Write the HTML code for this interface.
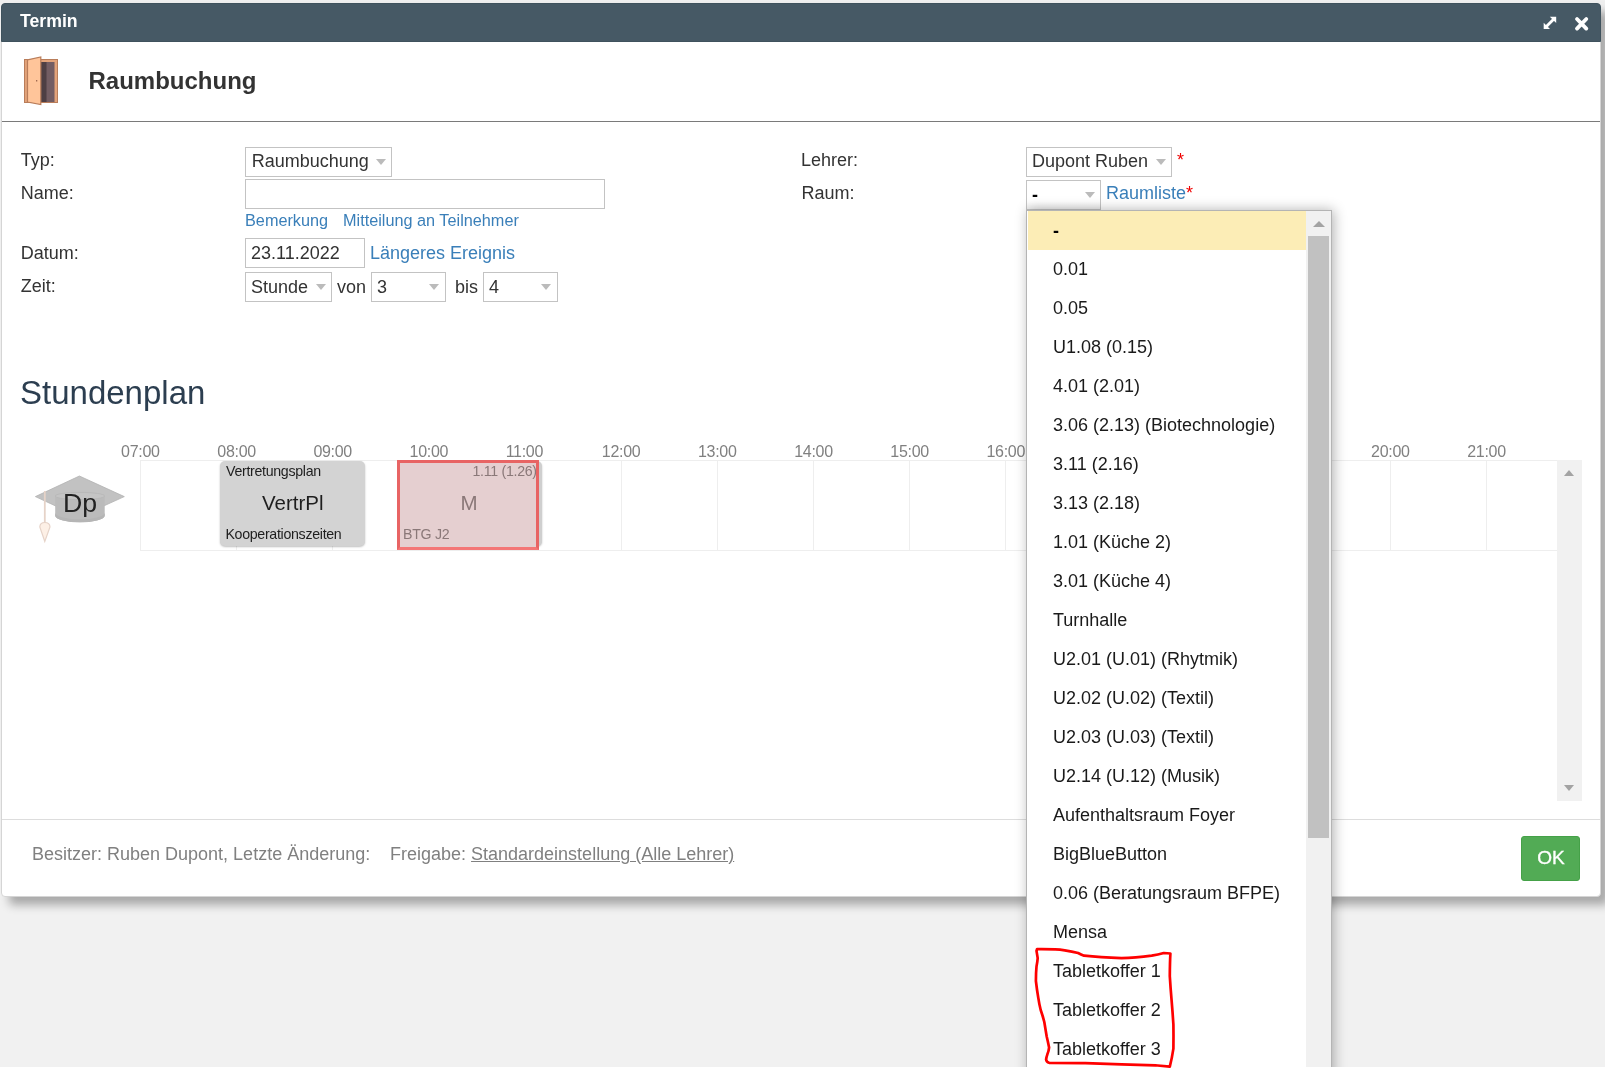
<!DOCTYPE html>
<html><head><meta charset="utf-8">
<style>
html,body{margin:0;padding:0;}
body{width:1605px;height:1069px;position:relative;overflow:hidden;background:#f1f1f1;font-family:"Liberation Sans",sans-serif;color:#333;}
.a{position:absolute;}
.t{position:absolute;white-space:nowrap;line-height:1;}
#root{position:absolute;left:0;top:0;width:1605px;height:1069px;will-change:transform;}
#dlg{position:absolute;left:1px;top:3px;width:1600px;height:894px;background:#fff;border-radius:4px;box-shadow:8px 8px 10px rgba(0,0,0,.3);border:1px solid #d5d5d5;box-sizing:border-box;}
#hdr{position:absolute;left:1px;top:3px;width:1600px;height:38.5px;background:#465965;border:1px solid #3f525d;box-sizing:border-box;border-radius:4px 4px 0 0;}
.sel{position:absolute;box-sizing:border-box;border:1px solid #c3c3c3;background:#fff;}
.inp{position:absolute;box-sizing:border-box;border:1px solid #c3c3c3;background:#fff;}
.arr{position:absolute;width:0;height:0;border-left:5px solid transparent;border-right:5px solid transparent;border-top:6px solid #bbb;}
.lnk{color:#3a7fb9;}
.hl{position:absolute;top:460px;height:90px;width:1px;background:#eee;}
.tm{position:absolute;top:443.5px;font-size:16px;letter-spacing:-0.3px;color:#808080;line-height:1;white-space:nowrap;}
.it{position:absolute;left:1053px;font-size:18px;color:#1a1a1a;line-height:1;white-space:nowrap;}
</style></head><body><div id="root">
<div class="a" style="left:0;top:0;width:1605px;height:3px;background:#efefef"></div>
<div id="dlg"></div>
<div id="hdr"></div>
<div class="t" style="left:20px;top:13.2px;font-size:17.7px;font-weight:bold;color:#fff">Termin</div>
<!-- expand icon -->
<svg class="a" style="left:0;top:0" width="1605" height="45">
<path d="M1545.6 27.2 L1554.4 18.4" stroke="#fff" stroke-width="2.8"/>
<path d="M1549.8 16.8 L1556.2 16.8 L1556.2 23.1 Z" fill="#fff"/>
<path d="M1543.7 22.8 L1543.7 29.1 L1550 29.1 Z" fill="#fff"/>
</svg>
<!-- close icon -->
<svg class="a" style="left:0;top:0" width="1605" height="45">
<path d="M1577 19 L1586.3 28.6 M1586.3 19 L1577 28.6" stroke="#fff" stroke-width="3.8" stroke-linecap="round"/>
</svg>

<!-- door icon -->
<svg class="a" style="left:23px;top:56px" width="38" height="50" viewBox="0 0 38 50">
<rect x="1.5" y="3.5" width="33" height="43" fill="#e3a37a" stroke="#b97d5a" stroke-width="1"/>
<rect x="17.5" y="6" width="14" height="40" fill="#735d63"/>
<rect x="17.5" y="6" width="6" height="40" fill="#4e3f44"/>
<path d="M4.5 3.8 L17.8 1 L17.8 48.5 L4.5 46 Z" fill="#ffc59a" stroke="#b97d5a" stroke-width="1.2"/>
<rect x="13" y="24" width="1.3" height="1.5" fill="#a06a50"/>
</svg>
<div class="t" style="left:88.5px;top:69px;font-size:24px;font-weight:bold;color:#333">Raumbuchung</div>
<div class="a" style="left:2px;top:121px;width:1598px;height:1px;background:#7a7a7a"></div>

<!-- form left -->
<div class="t" style="left:20.7px;top:151px;font-size:18px">Typ:</div>
<div class="t" style="left:20.7px;top:184px;font-size:18px">Name:</div>
<div class="t" style="left:20.7px;top:244px;font-size:18px">Datum:</div>
<div class="t" style="left:20.7px;top:276.5px;font-size:18px">Zeit:</div>

<div class="sel" style="left:245px;top:147px;width:147px;height:30px"></div>
<div class="t" style="left:251.7px;top:152px;font-size:18px">Raumbuchung</div>
<div class="arr" style="left:376px;top:159px"></div>

<div class="inp" style="left:245px;top:179px;width:360px;height:30px"></div>
<div class="t lnk" style="left:245px;top:212px;font-size:16.25px">Bemerkung</div>
<div class="t lnk" style="left:343px;top:212px;font-size:16.25px">Mitteilung an Teilnehmer</div>

<div class="inp" style="left:245px;top:238px;width:120px;height:30px"></div>
<div class="t" style="left:251px;top:244px;font-size:18px">23.11.2022</div>
<div class="t lnk" style="left:370px;top:244px;font-size:18px">Längeres Ereignis</div>

<div class="sel" style="left:245px;top:272px;width:87px;height:30px"></div>
<div class="t" style="left:251px;top:278px;font-size:18px">Stunde</div>
<div class="arr" style="left:316px;top:284px"></div>
<div class="t" style="left:337px;top:278px;font-size:18px">von</div>
<div class="sel" style="left:371px;top:272px;width:75px;height:30px"></div>
<div class="t" style="left:377px;top:278px;font-size:18px">3</div>
<div class="arr" style="left:429px;top:284px"></div>
<div class="t" style="left:455px;top:278px;font-size:18px">bis</div>
<div class="sel" style="left:483px;top:272px;width:75px;height:30px"></div>
<div class="t" style="left:489px;top:278px;font-size:18px">4</div>
<div class="arr" style="left:541px;top:284px"></div>

<!-- form right -->
<div class="t" style="left:801px;top:151px;font-size:18px">Lehrer:</div>
<div class="t" style="left:801.5px;top:183.6px;font-size:18px">Raum:</div>
<div class="sel" style="left:1026px;top:147px;width:146px;height:30px"></div>
<div class="t" style="left:1032px;top:152px;font-size:18px">Dupont Ruben</div>
<div class="arr" style="left:1156px;top:159px"></div>
<div class="t" style="left:1177px;top:151px;font-size:18px;color:#e00">*</div>
<div class="sel" style="left:1026px;top:180px;width:75px;height:30px;background:linear-gradient(#fff 72%,#efefef)"></div>
<div class="t" style="left:1032px;top:186px;font-size:18px;color:#000;font-weight:bold">-</div>
<div class="arr" style="left:1085px;top:192px"></div>
<div class="t lnk" style="left:1106px;top:183.5px;font-size:18px">Raumliste<span style="color:#e00">*</span></div>

<!-- Stundenplan -->
<div class="t" style="left:20px;top:376px;font-size:33px;color:#2c3e50">Stundenplan</div>
<div class="a" style="left:140px;top:460px;width:1417px;height:1px;background:#eee"></div>
<div class="a" style="left:140px;top:550px;width:1417px;height:1px;background:#eee"></div>
<div class="hl" style="left:139.8px"></div>
<div class="tm" style="left:121.1px">07:00</div>
<div class="hl" style="left:236.0px"></div>
<div class="tm" style="left:217.3px">08:00</div>
<div class="hl" style="left:332.1px"></div>
<div class="tm" style="left:313.4px">09:00</div>
<div class="hl" style="left:428.3px"></div>
<div class="tm" style="left:409.6px">10:00</div>
<div class="hl" style="left:524.4px"></div>
<div class="tm" style="left:505.7px">11:00</div>
<div class="hl" style="left:620.5px"></div>
<div class="tm" style="left:601.8px">12:00</div>
<div class="hl" style="left:716.7px"></div>
<div class="tm" style="left:698.0px">13:00</div>
<div class="hl" style="left:812.9px"></div>
<div class="tm" style="left:794.2px">14:00</div>
<div class="hl" style="left:909.0px"></div>
<div class="tm" style="left:890.3px">15:00</div>
<div class="hl" style="left:1005.2px"></div>
<div class="tm" style="left:986.5px">16:00</div>
<div class="hl" style="left:1101.3px"></div>
<div class="tm" style="left:1082.6px">17:00</div>
<div class="hl" style="left:1197.5px"></div>
<div class="tm" style="left:1178.8px">18:00</div>
<div class="hl" style="left:1293.6px"></div>
<div class="tm" style="left:1274.9px">19:00</div>
<div class="hl" style="left:1389.8px"></div>
<div class="tm" style="left:1371.1px">20:00</div>
<div class="hl" style="left:1485.9px"></div>
<div class="tm" style="left:1467.2px">21:00</div>


<!-- timeline scroll -->
<div class="a" style="left:1557px;top:460px;width:25px;height:341px;background:#f1f1f1"></div>
<div class="a" style="left:1564px;top:470px;width:0;height:0;border-left:5.5px solid transparent;border-right:5.5px solid transparent;border-bottom:6px solid #a3a3a3"></div>
<div class="a" style="left:1564px;top:785px;width:0;height:0;border-left:5.5px solid transparent;border-right:5.5px solid transparent;border-top:6px solid #a3a3a3"></div>
<!-- cap icon -->
<svg class="a" style="left:30px;top:470px" width="100" height="75" viewBox="30 470 100 75">
<path d="M35.4 496.6 L79.4 476 L124.3 496.6 L79.4 517 Z" fill="#c2c2c2" stroke="#b2b2b2" stroke-width="0.8"/>
<path d="M55.2 496 L55.2 516 A24.8 6.8 0 0 0 104.7 516 L104.7 496 Z" fill="#bbbbbb"/>
<ellipse cx="79.95" cy="496" rx="24.75" ry="3.6" fill="#c4c4c4" stroke="#b6b6b6" stroke-width="0.8"/>
<path d="M55.2 513 A24.8 6.8 0 0 0 104.7 513 L104.7 516 A24.8 6.8 0 0 1 55.2 516 Z" fill="#b5b5b5"/>
<line x1="44.8" y1="491" x2="44.8" y2="524" stroke="#e6d3c8" stroke-width="1.8"/>
<path d="M44.8 541.5 L39.8 527 Q40 522.5 44.8 522.5 Q49.8 522.5 50 527 Z" fill="#fdf0e6" stroke="#e6d3c8" stroke-width="1.2"/>
</svg>
<div class="t" style="left:63px;top:489.5px;font-size:26.7px;color:#222">Dp</div>
<!-- VertrPl box -->
<div class="a" style="left:220px;top:461px;width:145px;height:85px;background:#d3d3d3;border-radius:5px;box-shadow:0 1px 2px rgba(0,0,0,.25)"></div>
<div class="t" style="left:226px;top:463.7px;font-size:14.2px;letter-spacing:-0.3px;color:#1e1e1e">Vertretungsplan</div>
<div class="t" style="left:262px;top:492.5px;font-size:20.5px;color:#1e1e1e">VertrPl</div>
<div class="t" style="left:225.4px;top:526.5px;font-size:14.2px;letter-spacing:-0.3px;color:#1e1e1e">Kooperationszeiten</div>
<!-- M box -->
<div class="a" style="left:400px;top:461px;width:142px;height:85px;background:#cfcfcf;border-radius:5px;box-shadow:0 1px 2px rgba(0,0,0,.25)"></div>
<div class="a" style="left:397px;top:460px;width:142px;height:90px;box-sizing:border-box;background:#e5cfd0;border:3px solid #e86464;border-bottom-color:#f47676"></div>
<div class="t" style="left:472.5px;top:464px;font-size:14.2px;letter-spacing:-0.3px;color:#8a7878">1.11 (1.26)</div>
<div class="t" style="left:460.5px;top:492.5px;font-size:20.5px;color:#8a7878">M</div>
<div class="t" style="left:403px;top:526.5px;font-size:14.2px;letter-spacing:-0.3px;color:#8a7878">BTG J2</div>

<!-- footer -->
<div class="a" style="left:2px;top:819px;width:1598px;height:1px;background:#ddd"></div>
<div class="t" style="left:32px;top:845px;font-size:18px;color:#808080">Besitzer: Ruben Dupont, Letzte Änderung:</div>
<div class="t" style="left:390px;top:845px;font-size:18px;color:#808080">Freigabe: <span style="text-decoration:underline">Standardeinstellung (Alle Lehrer)</span></div>
<div class="a" style="left:1521px;top:836px;width:59px;height:45px;box-sizing:border-box;background:#52ab55;border:1px solid #45a148;border-radius:3px"></div>
<div class="t" style="left:1537.3px;top:848px;font-size:19px;color:#fff;-webkit-text-stroke:0.35px #fff">OK</div>

<!-- dropdown -->
<div class="a" style="left:1026px;top:210px;width:306px;height:870px;box-sizing:border-box;background:#fff;border:1px solid #b4b4b4;box-shadow:1.5px 0 12px rgba(0,0,0,.3)"></div>
<div class="a" style="left:1028px;top:211px;width:278px;height:39px;background:#fcedb6"></div>
<div class="a" style="left:1306px;top:211px;width:25px;height:860px;background:#f1f1f1"></div>
<div class="a" style="left:1308px;top:236px;width:21px;height:602px;background:#c1c1c1"></div>
<div class="a" style="left:1313px;top:221px;width:0;height:0;border-left:6px solid transparent;border-right:6px solid transparent;border-bottom:6px solid #a3a3a3"></div>
<div class="it" style="top:221.5px;color:#000;font-weight:bold">-</div>
<div class="it" style="top:259.5px">0.01</div>
<div class="it" style="top:298.5px">0.05</div>
<div class="it" style="top:337.5px">U1.08 (0.15)</div>
<div class="it" style="top:376.5px">4.01 (2.01)</div>
<div class="it" style="top:415.5px">3.06 (2.13) (Biotechnologie)</div>
<div class="it" style="top:454.5px">3.11 (2.16)</div>
<div class="it" style="top:493.5px">3.13 (2.18)</div>
<div class="it" style="top:532.5px">1.01 (Küche 2)</div>
<div class="it" style="top:571.5px">3.01 (Küche 4)</div>
<div class="it" style="top:610.5px">Turnhalle</div>
<div class="it" style="top:649.5px">U2.01 (U.01) (Rhytmik)</div>
<div class="it" style="top:688.5px">U2.02 (U.02) (Textil)</div>
<div class="it" style="top:727.5px">U2.03 (U.03) (Textil)</div>
<div class="it" style="top:766.5px">U2.14 (U.12) (Musik)</div>
<div class="it" style="top:805.5px">Aufenthaltsraum Foyer</div>
<div class="it" style="top:844.5px">BigBlueButton</div>
<div class="it" style="top:883.5px">0.06 (Beratungsraum BFPE)</div>
<div class="it" style="top:922.5px">Mensa</div>
<div class="it" style="top:961.5px">Tabletkoffer 1</div>
<div class="it" style="top:1000.5px">Tabletkoffer 2</div>
<div class="it" style="top:1039.5px">Tabletkoffer 3</div>

<div class="a" style="left:0;top:1067px;width:1605px;height:2px;background:#fff"></div>
<svg class="a" style="left:0;top:0" width="1605" height="1069">
<path d="M1037.1 949 C1045 949.2 1055.2 949.4 1055.2 949.4 C1060 949.6 1064.8 950.3 1064.8 950.3 C1072 951.5 1078.1 953 1078.1 953 C1081 954.5 1084.1 955.7 1084.1 955.7 C1100 957.5 1121.5 958.1 1121.5 958.1 C1135 957.8 1151.7 955.7 1151.7 955.7 C1158 954.6 1163.8 953 1163.8 953 L1170.4 953.5 C1169.9 962 1169.8 976.2 1169.8 976.2 C1170.5 988 1171.6 1000.3 1171.6 1000.3 C1172.6 1012 1173.4 1024.5 1173.4 1024.5 C1173.6 1036 1173.4 1048.6 1173.4 1048.6 C1172 1058 1169.8 1066.7 1169.8 1066.7 C1163 1066 1157.7 1065.5 1157.7 1065.5 C1140 1064.8 1121.5 1064.3 1121.5 1064.3 C1100 1063.7 1085.3 1063.1 1085.3 1063.1 C1068 1062.9 1049.1 1062.8 1049.1 1062.8 C1046.5 1062 1046.1 1059.5 1046.1 1059.5 C1046.4 1057 1047.3 1054.6 1047.3 1054.6 C1048.8 1051 1049.1 1047.4 1049.1 1047.4 C1048 1042 1046.7 1036.5 1046.7 1036.5 C1045.5 1029 1044.3 1022 1044.3 1022 C1042.8 1016 1040.7 1010 1040.7 1010 C1039.2 1004 1038.3 997.9 1038.3 997.9 C1036.8 989 1035.9 981 1035.9 981 C1035.9 973 1036.5 966.5 1036.5 966.5 C1037.4 962 1037.7 958.1 1037.7 958.1 C1037 954 1036.5 950.9 1036.5 950.9 Z" fill="none" stroke="#f00" stroke-width="2.7" stroke-linejoin="round"/>
</svg>
</div></body></html>
